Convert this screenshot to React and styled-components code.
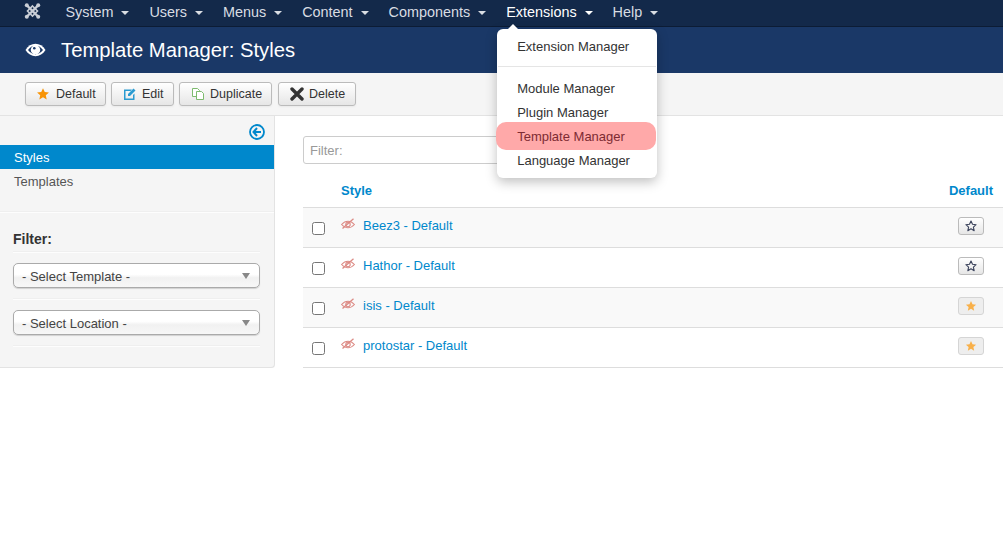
import React from "react";
import styled, { createGlobalStyle } from "styled-components";

const GlobalStyle = createGlobalStyle`
    html, body {
        margin: 0;
        padding: 0;
        background: #fff;
        font-family: "Liberation Sans", Arial, sans-serif;
        font-size: 13px;
        color: #333;
    }
    * { box-sizing: border-box; }
`;

const Navbar = styled.nav`
    height: 27px;
    background: #13294a;
    border-bottom: 1px solid #0c1c35;
    display: flex;
    align-items: flex-start;
    padding-left: 15.4px;
`;

const Brand = styled.div`
    width: 40px;
    height: 22px;
    display: flex;
    align-items: center;
    padding-left: 9px;
`;

const NavItem = styled.div`
    position: relative;
    height: 24px;
    padding: 0 10px;
    display: flex;
    align-items: center;
    gap: 8px;
    font-size: 14.4px;
    color: ${(p) => (p.$open ? "#fff" : "#d9dde3")};
`;

const Caret = styled.span`
    width: 0;
    height: 0;
    margin-top: 2px;
    border-left: 4px solid transparent;
    border-right: 4px solid transparent;
    border-top: 4px solid currentColor;
`;

const Menu = styled.div`
    position: absolute;
    z-index: 10;
    top: 29px;
    left: 1px;
    width: 160px;
    height: 149px;
    padding-top: 6px;
    background: #fff;
    border-radius: 6px;
    box-shadow: 0 4px 12px rgba(0, 0, 0, 0.25);
    color: #333;
    font-size: 13px;

    &::before {
        content: "";
        position: absolute;
        top: -5px;
        left: 11px;
        border-left: 5px solid transparent;
        border-right: 5px solid transparent;
        border-bottom: 5px solid #fff;
    }
`;

const MenuRow = styled.div`
    position: relative;
    height: 24px;
    line-height: 24px;
    padding-left: 20px;
    white-space: nowrap;
`;

const Highlight = styled.span`
    position: absolute;
    top: -3px;
    left: -1px;
    width: 160px;
    height: 28px;
    border-radius: 10px;
    background: #ffa9a9;
`;

const MenuLabel = styled.span`
    position: relative;
    color: ${(p) => (p.$hot ? "#7d2b33" : "#333")};
`;

const MenuDivider = styled.div`
    height: 1px;
    margin: 7px 1px 10px;
    background: #e5e5e5;
`;

const Header = styled.header`
    height: 46px;
    background: #1a3867;
    display: flex;
    align-items: center;
    padding-left: 25px;
    gap: 15px;
    color: #fff;
`;

const Title = styled.h1`
    margin: 0;
    font-size: 20.25px;
    font-weight: normal;
    line-height: 46px;
`;

const Toolbar = styled.div`
    height: 43px;
    padding: 9px 0 0 25px;
    display: flex;
    align-items: flex-start;
    background: #f5f5f5;
    border-bottom: 1px solid #e3e3e3;
`;

const ToolButton = styled.button`
    width: ${(p) => p.$w}px;
    height: 24px;
    margin-right: ${(p) => p.$gap}px;
    padding: 0 0 0 ${(p) => p.$pad}px;
    display: flex;
    align-items: center;
    gap: ${(p) => p.$iconGap}px;
    border: 1px solid #bbb;
    border-radius: 3px;
    background: linear-gradient(#ffffff, #e6e6e6);
    box-shadow: inset 0 1px 0 rgba(255, 255, 255, 0.2), 0 1px 2px rgba(0, 0, 0, 0.05);
    font: 12.5px "Liberation Sans", Arial, sans-serif;
    color: #333;
`;

const Main = styled.div`
    display: flex;
    align-items: flex-start;
`;

const Sidebar = styled.aside`
    width: 275px;
    height: 252px;
    background: #f5f5f5;
    border-right: 1px solid #e3e3e3;
    border-bottom: 1px solid #e3e3e3;
    border-bottom-right-radius: 4px;
    box-shadow: 0 1px 1px rgba(0, 0, 0, 0.03);
`;

const ToggleRow = styled.div`
    height: 29px;
    padding: 8px 9px 0 0;
    display: flex;
    justify-content: flex-end;
`;

const SideLink = styled.div`
    height: 24px;
    line-height: 25px;
    padding-left: 14px;
    background: ${(p) => (p.$active ? "#0088cc" : "transparent")};
    color: ${(p) => (p.$active ? "#fff" : "#555")};
`;

const Rule = styled.hr`
    margin: ${(p) => p.$m || "0"};
    border: 0;
    border-top: 1px solid #eee;
    border-bottom: 1px solid #fff;
    opacity: 0.8;
`;

const FilterBox = styled.div`
    padding: 0 14px 0 13px;
`;

const FilterTitle = styled.h4`
    margin: 17px 0 3px;
    font-size: 14px;
    line-height: 18px;
    font-weight: bold;
    color: #333;
`;

const Select = styled.div`
    height: 25px;
    margin: 10px 0;
    padding: 1px 8px 0;
    display: flex;
    align-items: center;
    justify-content: space-between;
    border: 1px solid #aaa;
    border-radius: 5px;
    background: linear-gradient(#fff 0%, #fff 45%, #f1f1f1 60%, #f7f7f7 100%);
    box-shadow: 0 1px 1px rgba(0, 0, 0, 0.15);
    font-size: 13px;
    color: #444;
`;

const SelectArrow = styled.span`
    width: 0;
    height: 0;
    margin-right: 1px;
    border-left: 4px solid transparent;
    border-right: 4px solid transparent;
    border-top: 6px solid #888;
`;

const Content = styled.section`
    flex: 1;
    padding: 20px 0 0 28px;
`;

const FilterInput = styled.input`
    display: block;
    width: 220px;
    height: 28px;
    padding: 0 6px;
    border: 1px solid #ccc;
    border-radius: 3px;
    background: #fff;
    font: 13px "Liberation Sans", Arial, sans-serif;
    &::placeholder { color: #999; opacity: 1; }
`;

const TableHead = styled.div`
    height: 43px;
    padding: 13px 10px 0 38px;
    display: flex;
    justify-content: space-between;
    line-height: 28px;
    font-weight: bold;
    color: #0088cc;
`;

const Row = styled.div`
    height: 40px;
    display: flex;
    align-items: flex-start;
    border-top: 1px solid #ddd;
    background: ${(p) => (p.$odd ? "#f9f9f9" : "#fff")};
    &:last-child { border-bottom: 1px solid #ddd; height: 41px; }
`;

const Check = styled.input.attrs({ type: "checkbox" })`
    width: 13px;
    height: 13px;
    margin: 14px 16px 0 9px;
`;

const StatusIcon = styled.span`
    width: 14px;
    height: 14px;
    margin: 10px 8px 0 0;
    display: flex;
`;

const StyleLink = styled.a`
    flex: 1;
    margin-top: 9px;
    line-height: 18px;
    color: #0088cc;
`;

const StarButton = styled.button`
    width: 26px;
    height: 18px;
    margin: 9px 19px 0 0;
    padding: 0;
    display: flex;
    align-items: center;
    justify-content: center;
    border: 1px solid ${(p) => (p.$on ? "#d5d5d5" : "#bbb")};
    border-radius: 3px;
    background: ${(p) => (p.$on ? "#eeeeee" : "linear-gradient(#fff, #e6e6e6)")};
`;

const STAR = "M12 2l3 6.6 7.2.8-5.4 4.8 1.5 7.1L12 17.7l-6.3 3.6 1.5-7.1L1.8 9.4 9 8.6z";

function Star({ size, color, outline }) {
    return (
        <svg width={size} height={size} viewBox="0 0 24 24">
            <path d={STAR} fill={outline ? "none" : color} stroke={color} strokeWidth={outline ? 2.2 : 0} strokeLinejoin="round" />
        </svg>
    );
}

function Logo() {
    return (
        <svg width="17" height="18" viewBox="0 0 17 18" fill="none" stroke="#c9ced6" strokeWidth="2.4" strokeLinecap="round">
            <path d="M3 3.5l11 11M14 3.5l-11 11" />
            <path d="M8.5 4L13.5 9 8.5 14 3.5 9z" strokeWidth="1.6" />
            <circle cx="2.8" cy="3.3" r="2" fill="#c9ced6" stroke="none" />
            <circle cx="14.2" cy="3.3" r="2" fill="#c9ced6" stroke="none" />
            <circle cx="2.8" cy="14.7" r="2" fill="#c9ced6" stroke="none" />
            <circle cx="14.2" cy="14.7" r="2" fill="#c9ced6" stroke="none" />
        </svg>
    );
}

function Eye() {
    return (
        <svg width="21" height="14" viewBox="0 0 21 14">
            <path d="M.5 7C3 3 6.5.8 10.5.8S18 3 20.5 7c-2.5 4-6 6.2-10 6.2S3 11 .5 7z" fill="#fff" />
            <path d="M3 7c1.8-2.4 3.600-3.700 5.300-4.300a4.700 4.700 0 1 0 4.400 0C14.400 3.300 16.200 4.600 18 7c-2 2.600-4.500 4.300-7.500 4.300S5 9.600 3 7z" fill="#1a3867" />
            <circle cx="10.5" cy="6.5" r="3.3" fill="#fff" />
            <circle cx="9.3" cy="5.3" r="1.3" fill="#1a3867" />
        </svg>
    );
}

function EditIcon() {
    return (
        <svg width="14" height="14" viewBox="0 0 14 14">
            <path d="M1 2.5h8L7.5 4h-5v7.5H10V8l1.5-1.500V13H1z" fill="#2a9bd1" />
            <path d="M5 7l5.5-5.500 2 2L7 9H5z" fill="#2a9bd1" />
        </svg>
    );
}

function DuplicateIcon() {
    return (
        <svg width="14" height="14" viewBox="0 0 14 14" fill="#fff" stroke="#7dbb6e" strokeWidth="1">
            <path d="M1.5 1.5h5l2 2v6h-7z" />
            <path d="M5.5 4.5h5l2 2v6h-7z" />
        </svg>
    );
}

function DeleteIcon() {
    return (
        <svg width="14" height="14" viewBox="0 0 14 14">
            <path d="M2 2l10 10M12 2L2 12" stroke="#333" strokeWidth="3.4" strokeLinecap="round" />
        </svg>
    );
}

function BackIcon() {
    return (
        <svg width="16" height="16" viewBox="0 0 16 16" fill="none" stroke="#0088cc">
            <circle cx="8" cy="8" r="7" strokeWidth="1.8" />
            <path d="M8 4L4.5 8 8 12M5 8h7" strokeWidth="2" />
        </svg>
    );
}

function EyeSlash() {
    return (
        <svg width="14" height="12" viewBox="0 0 14 12" fill="none" stroke="#dc8a84" strokeWidth="1.1">
            <path d="M.6 6.5C2.5 4.300 4.700 3.200 7 3.200s4.500 1.100 6.400 3.300C11.500 8.700 9.300 9.800 7 9.800S2.500 8.700.6 6.500z" />
            <circle cx="7" cy="6.5" r="2.2" />
            <path d="M1.5 10.5L12.5.8" strokeWidth="1.3" />
        </svg>
    );
}

const navItems = ["System", "Users", "Menus", "Content", "Components", "Extensions", "Help"];

const styles = [
    { name: "Beez3 - Default", on: false },
    { name: "Hathor - Default", on: false },
    { name: "isis - Default", on: true },
    { name: "protostar - Default", on: true },
];

const buttons = [
    { label: "Default", icon: <Star size={14} color="#f89406" />, w: 81, gap: 5, pad: 10, iconGap: 6 },
    { label: "Edit", icon: <EditIcon />, w: 63, gap: 5, pad: 11, iconGap: 5 },
    { label: "Duplicate", icon: <DuplicateIcon />, w: 93, gap: 6, pad: 11, iconGap: 5 },
    { label: "Delete", icon: <DeleteIcon />, w: 78, gap: 0, pad: 11, iconGap: 5 },
];

export default function App() {
    return (
        <>
            <GlobalStyle />
            <Navbar>
                <Brand><Logo /></Brand>
                {navItems.map((item) => (
                    <NavItem key={item} $open={item === "Extensions"}>
                        {item}
                        <Caret />
                        {item === "Extensions" && (
                            <Menu>
                                <MenuRow><MenuLabel>Extension Manager</MenuLabel></MenuRow>
                                <MenuDivider />
                                <MenuRow><MenuLabel>Module Manager</MenuLabel></MenuRow>
                                <MenuRow><MenuLabel>Plugin Manager</MenuLabel></MenuRow>
                                <MenuRow><Highlight /><MenuLabel $hot>Template Manager</MenuLabel></MenuRow>
                                <MenuRow><MenuLabel>Language Manager</MenuLabel></MenuRow>
                            </Menu>
                        )}
                    </NavItem>
                ))}
            </Navbar>

            <Header>
                <Eye />
                <Title>Template Manager: Styles</Title>
            </Header>

            <Toolbar>
                {buttons.map((b) => (
                    <ToolButton key={b.label} $w={b.w} $gap={b.gap} $pad={b.pad} $iconGap={b.iconGap}>
                        {b.icon}
                        {b.label}
                    </ToolButton>
                ))}
            </Toolbar>

            <Main>
                <Sidebar>
                    <ToggleRow><BackIcon /></ToggleRow>
                    <SideLink $active>Styles</SideLink>
                    <SideLink>Templates</SideLink>
                    <Rule $m="18px 0 0" />
                    <FilterBox>
                        <FilterTitle>Filter:</FilterTitle>
                        <Rule />
                        <Select>- Select Template -<SelectArrow /></Select>
                        <Rule />
                        <Select>- Select Location -<SelectArrow /></Select>
                        <Rule />
                    </FilterBox>
                </Sidebar>

                <Content>
                    <FilterInput placeholder="Filter:" />
                    <TableHead>
                        <span>Style</span>
                        <span>Default</span>
                    </TableHead>
                    {styles.map((s, i) => (
                        <Row key={s.name} $odd={i % 2 === 0}>
                            <Check />
                            <StatusIcon><EyeSlash /></StatusIcon>
                            <StyleLink>{s.name}</StyleLink>
                            <StarButton $on={s.on}>
                                {s.on
                                    ? <Star size={12} color="#f8b04a" />
                                    : <Star size={12} color="#39415a" outline />}
                            </StarButton>
                        </Row>
                    ))}
                </Content>
            </Main>
        </>
    );
}
